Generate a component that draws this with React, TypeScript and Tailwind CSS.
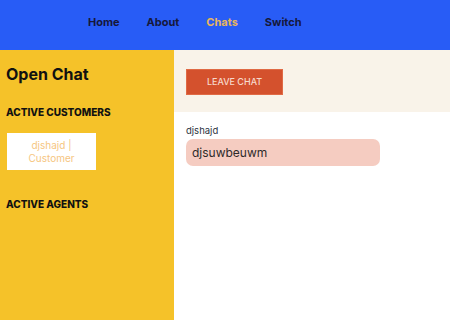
import React from 'react';

const font = { fontFamily: 'Inter, "Noto Sans", sans-serif' };

export default function App() {
  const links = ['Home', 'About', 'Chats', 'Switch'];

  return (
    <div className="w-[450px] h-[320px] flex flex-col overflow-hidden" style={font}>
      {/* Top navigation */}
      <nav className="h-[50px] bg-[#285cf6] flex items-center pl-[88px] pb-[5px] gap-[27px]">
        {links.map((l) => (
          <span
            key={l}
            className={`text-[11px] font-bold ${l === 'Chats' ? 'text-[#e9b65c]' : 'text-[#16183a]'}`}
          >
            {l}
          </span>
        ))}
      </nav>

      <div className="flex flex-1">
        {/* Sidebar */}
        <aside className="w-[174px] bg-[#f5c229] px-[6px] pt-[13px]">
          <h1 className="text-[16px] font-bold text-[#111] leading-[22px]">Open Chat</h1>
          <h2 className="mt-[20px] text-[10px] font-extrabold text-[#111] leading-[14px]">ACTIVE CUSTOMERS</h2>
          <div className="mt-[14px] ml-[1px] w-[89px] h-[37px] bg-white flex flex-col items-center justify-center text-[10px] leading-[13px] text-[#f6c67f]">
            <span>djshajd |</span>
            <span>Customer</span>
          </div>
          <h2 className="mt-[27px] text-[10px] font-extrabold text-[#111] leading-[14px]">ACTIVE AGENTS</h2>
        </aside>

        {/* Chat area */}
        <main className="flex-1 bg-white">
          <div className="h-[62px] bg-[#f9f3e9] px-[12px] pt-[17px]">
            <button className="w-[97px] h-[26px] bg-[#d4512d] border border-[#e06a45] text-[9px] font-medium text-[#f6d9cc]">
              LEAVE CHAT
            </button>
          </div>
          <div className="px-[12px] pt-[13px]">
            <div className="text-[9.5px] text-[#2b3340] leading-[12px]">djshajd</div>
            <div className="mt-[2px] w-[194px] h-[27px] rounded-[7px] bg-[#f5ccc1] flex items-center px-[6px] text-[12px] text-[#2e2a2a]">
              djsuwbeuwm
            </div>
          </div>
        </main>
      </div>
    </div>
  );
}
